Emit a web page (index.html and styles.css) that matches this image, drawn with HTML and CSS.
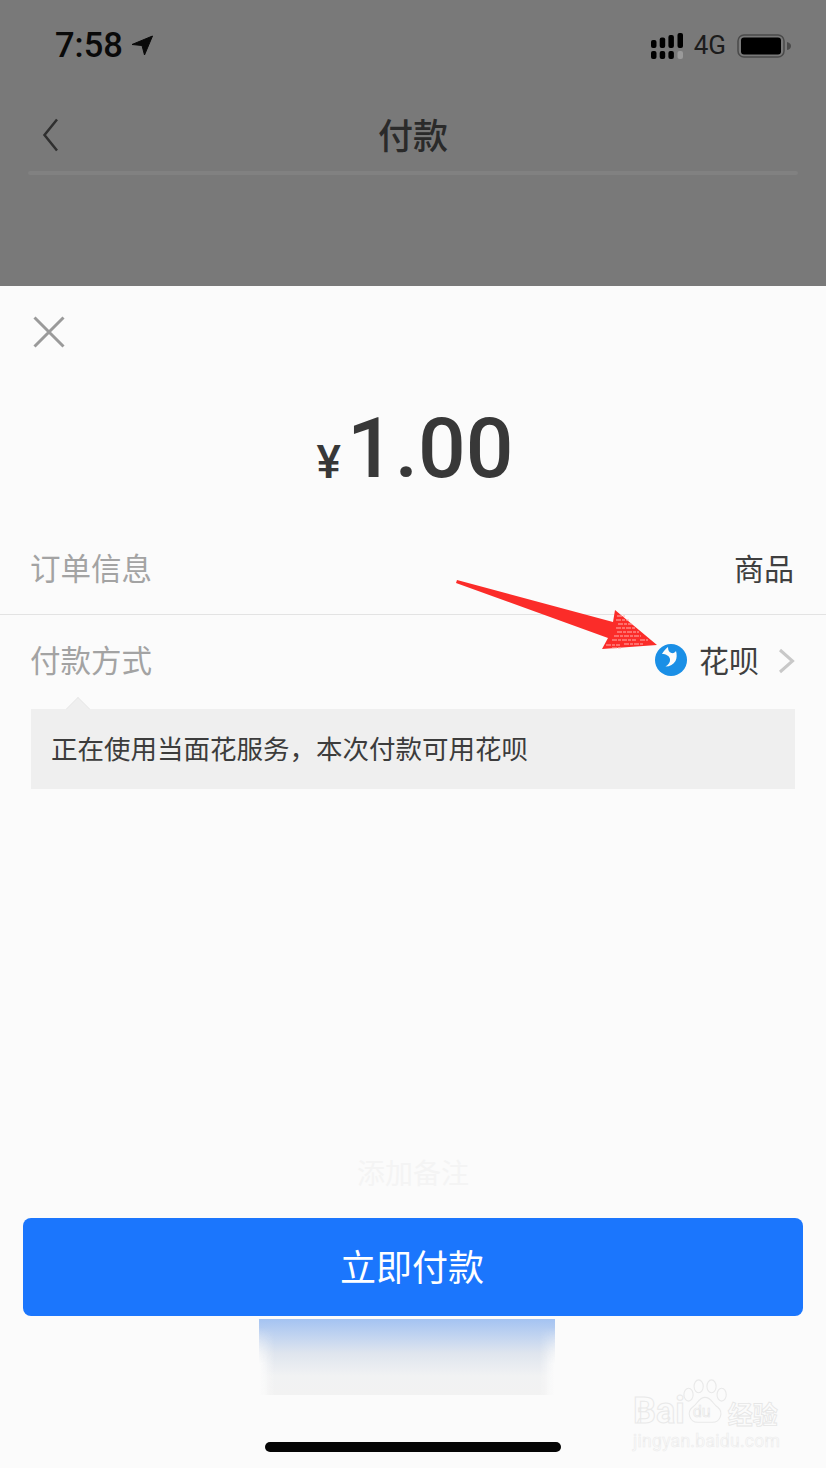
FILE: index.html
```html
<!DOCTYPE html>
<html lang="zh">
<head>
<meta charset="utf-8">
<title>付款</title>
<link rel="stylesheet" href="styles.css">
</head>
<body>
<div class="screen">
  <header class="dim">
    <div class="status">
      <div class="status-left">
        <span class="time">7:58</span>
        <svg class="loc" viewBox="0 0 22 21"><path d="M21.500 1 13.500 20 11 10.500 1 9.500Z"/></svg>
      </div>
      <div class="status-right">
        <svg class="signal" viewBox="0 0 32 26">
          <g fill="#000"><rect x="0" y="7" width="5.500" height="8" rx="2"/><rect x="8.700" y="4.500" width="5.500" height="10.500" rx="2"/><rect x="17.400" y="2" width="5.500" height="13" rx="2"/><rect x="26.500" y="0" width="5.500" height="15" rx="2"/><rect x="0" y="18" width="5.500" height="8" rx="2"/><rect x="8.700" y="18" width="5.500" height="8" rx="2"/><rect x="17.400" y="18" width="5.500" height="8" rx="2"/></g>
          <rect x="26.500" y="18" width="5.500" height="8" rx="2" fill="#9a9a9a"/>
        </svg>
        <span class="net">4G</span>
        <svg class="battery" viewBox="0 0 54 24">
          <rect x="1" y="1" width="46" height="22" rx="6" fill="none" stroke="#4a4a4a" stroke-width="1.500"/>
          <rect x="4" y="3.500" width="40" height="17" rx="3" fill="#000"/>
          <path d="M50 8c3 .5 4 2.500 4 4s-1 3.500-4 4Z" fill="#4a4a4a"/>
        </svg>
      </div>
    </div>
    <nav class="nav">
      <svg class="back" viewBox="0 0 16 34"><path d="M14.500 1.500 2 17l12.500 15.500"/></svg>
      <h1 class="nav-title">付款</h1>
    </nav>
    <div class="nav-rule"></div>
  </header>

  <main class="sheet">
    <svg class="close" viewBox="0 0 32 32"><path d="M1.500 1.500 30.500 30.500M30.500 1.500 1.500 30.500"/></svg>
    <div class="amount"><span class="yen">¥</span><span class="value">1.00</span></div>
    <div class="row row-order">
      <span class="label">订单信息</span>
      <span class="val">商品</span>
    </div>
    <div class="row row-pay">
      <span class="label">付款方式</span>
      <span class="method">
        <svg class="huabei" viewBox="0 0 32 32">
          <circle cx="16" cy="16" r="16" fill="#1a8fe6"/>
          <path d="M7 10C8.500 7 10.500 5 13 3 13 6 14 8.500 16.500 9 18.500 9.500 20 8.500 21 7 22 10.500 22 14 20.500 17 18.500 20.500 15 22.500 10.500 22.500 13.500 20.500 15.500 18 15 15 14.500 12 11 10 7 10Z" fill="#fbfbfb"/>
          <circle cx="17.500" cy="5.500" r="2.600" fill="#1a8fe6"/>
        </svg>
        <span class="val">花呗</span>
        <svg class="chev" viewBox="0 0 17 26"><path d="M2 2 14.500 13 2 24"/></svg>
      </span>
    </div>
    <div class="tip">
      <span class="tip-caret"></span>
      正在使用当面花服务，本次付款可用花呗
    </div>
    <div class="spacer"></div>
    <div class="remark">添加备注</div>
    <button class="pay">立即付款</button>
    <div class="fade"></div>
    <div class="home"></div>
  </main>

  <svg class="arrow" viewBox="0 0 210 80">
    <path d="M1 0 157 42 159 30 201 65 146 69 152 58 0 3Z" fill="#fb2c29"/>
    <g stroke="#ffb0ae" stroke-width="1" stroke-dasharray="5 1 3 1">
      <path d="M161 36h8M160 40h13M162 44h14M160 48h19M161 52h22M158 56h27M156 60h24M184 60h8M150 65h14M168 64h20M156 68h10"/>
    </g>
  </svg>

  <div class="mark">
    <div class="mark-top">
      <span class="mark-bai">Bai</span>
      <span class="mark-paw">
        <svg class="paw" viewBox="0 0 50 50">
          <g fill="#fbfbfb" stroke="#e9e9e9" stroke-width="1.200">
            <ellipse cx="6" cy="17" rx="5" ry="7"/><ellipse cx="17" cy="8" rx="5" ry="7"/><ellipse cx="31" cy="8" rx="5" ry="7"/><ellipse cx="42" cy="17" rx="5" ry="7"/>
            <path d="M24 20c-7 0-8 7-14 11-6 5-3 16 6 16h16c9 0 12-11 6-16-6-4-7-11-14-11Z"/>
          </g>
        </svg>
        <span class="mark-du">du</span>
      </span>
      <span class="mark-cn">经验</span>
    </div>
    <div class="mark-url">jingyan.baidu.com</div>
  </div>
</div>
</body>
</html>
```

FILE: styles.css
```css
* { box-sizing: border-box; margin: 0; padding: 0; }
html, body { width: 826px; height: 1468px; overflow: hidden; }
body { font-family: "Noto Sans CJK SC", "Noto Sans", sans-serif; background: #fbfbfb; }
.screen { position: relative; width: 826px; height: 1468px; display: flex; flex-direction: column; }

.dim { height: 286px; flex: none; background: #797979; padding-top: 31px; }
.status { height: 29px; display: flex; justify-content: space-between; align-items: center; padding: 0 35px 0 55px; }
.status-left { display: flex; align-items: center; gap: 8px; }
.time { font: 500 34.500px/29px "Roboto", sans-serif; color: #0a0a0a; }
.loc { width: 22px; height: 21px; fill: #0a0a0a; stroke: #0a0a0a; stroke-width: 1; stroke-linejoin: round; }
.status-right { display: flex; align-items: center; gap: 11px; }
.signal { width: 32px; height: 26px; }
.net { font: 400 26px/29px "Roboto", sans-serif; color: #1c1c1c; }
.battery { width: 54px; height: 24px; }

.nav { position: relative; height: 82px; margin-top: 39px; display: flex; align-items: center; justify-content: center; }
.back { position: absolute; left: 41px; top: 19px; width: 19px; height: 34px; fill: none; stroke: #2f2f2f; stroke-width: 2.500; }
.nav-title { font-size: 35px; font-weight: 500; line-height: 50px; color: #2a2a2a; margin-top: -12px; }
.nav-rule { height: 4px; margin: -10px 28px 0; background: #818181; border-radius: 2px; }

.sheet { flex: 1; display: flex; flex-direction: column; background: #fbfbfb; }
.close { width: 32px; height: 32px; margin: 30px 0 0 33px; fill: none; stroke: #9a9a9a; stroke-width: 3; flex: none; }
.amount { height: 96px; margin-top: 53px; padding-left: 4px; display: flex; justify-content: center; align-items: baseline; color: #383838; }
.yen { font: 500 46px/96px "Roboto", sans-serif; margin-right: 6px; position: relative; top: 1px; }
.value { font: 500 84px/96px "Roboto", sans-serif; }

.row { display: flex; justify-content: space-between; align-items: center; padding: 0 32px 0 30px; flex: none; }
.row-order { height: 92px; margin-top: 26px; border-bottom: 1px solid #e3e3e3; padding-bottom: 3px; }
.row-pay { height: 94px; padding-bottom: 6px; }
.label { font-size: 30.500px; line-height: 44px; color: #a3a3a3; }
.val { font-size: 30px; line-height: 44px; color: #3f3f3f; }
.method { display: flex; align-items: center; }
.huabei { width: 32px; height: 32px; margin: 2px 12px 0 0; }
.chev { width: 17px; height: 26px; margin: 3px -1px 0 19px; fill: none; stroke: #c8c8c8; stroke-width: 3; }

.tip { position: relative; height: 80px; margin: 0 31px; padding-left: 20px; background: #efefef; font-size: 26.500px; line-height: 77px; color: #3c3c3c; flex: none; }
.tip-caret { position: absolute; left: 37px; top: -10px; width: 20px; height: 20px; background: #efefef; border-left: 1px solid #e8e8e8; border-top: 1px solid #e8e8e8; transform: rotate(45deg) scale(.85); }

.spacer { flex: 1; }
.remark { text-align: center; font-size: 28px; line-height: 36px; color: #f4f4f4; margin-bottom: 28px; }
.pay { display: block; height: 98px; margin: 0 23px; padding: 0 2px 4px 0; border: 0; border-radius: 8px; background: #1b76fd; color: #fff; font: 400 36px/94px "Noto Sans CJK SC", sans-serif; flex: none; }
.fade { position: relative; width: 296px; height: 76px; margin: 3px 0 0 259px; background: linear-gradient(#a4c3f2 0%, #dfe5ee 45%, #f1f2f3 75%, #f2f2f2 100%); flex: none; }
.fade::after { content: ""; position: absolute; inset: 0; background: linear-gradient(90deg, #fbfbfb 0, rgba(251,251,251,0) 16px, rgba(251,251,251,0) 280px, #fbfbfb 100%); -webkit-mask-image: linear-gradient(transparent 0, transparent 8px, #000 45px); }
.home { width: 296px; height: 10px; margin: 47px 0 16px 265px; background: #050505; border-radius: 5px; flex: none; }

.arrow { position: absolute; left: 456px; top: 580px; width: 210px; height: 80px; }

.mark { position: absolute; left: 633px; top: 1379px; width: 150px; color: #fbfbfb; -webkit-text-stroke: 1px #e9e9e9; }
.mark-top { position: relative; display: flex; align-items: flex-end; height: 50px; }
.mark-bai { font: 700 36px/36px "Roboto", sans-serif; }
.mark-paw { position: relative; width: 44px; height: 50px; margin-left: -2px; flex: none; }
.paw { width: 46px; height: 46px; display: block; }
.mark-du { position: absolute; left: 10px; top: 24px; font: 400 16px/18px "Roboto", sans-serif; -webkit-text-stroke: .6px #e6e6e6; }
.mark-cn { font: 700 25px/32px "Noto Sans CJK SC", sans-serif; margin-left: 1px; white-space: nowrap; -webkit-text-stroke: .8px #e6e6e6; }
.mark-url { font: 400 17.500px/22px "Roboto", sans-serif; white-space: nowrap; -webkit-text-stroke: .6px #ececec; letter-spacing: .3px; margin-top: 1px; }
```
